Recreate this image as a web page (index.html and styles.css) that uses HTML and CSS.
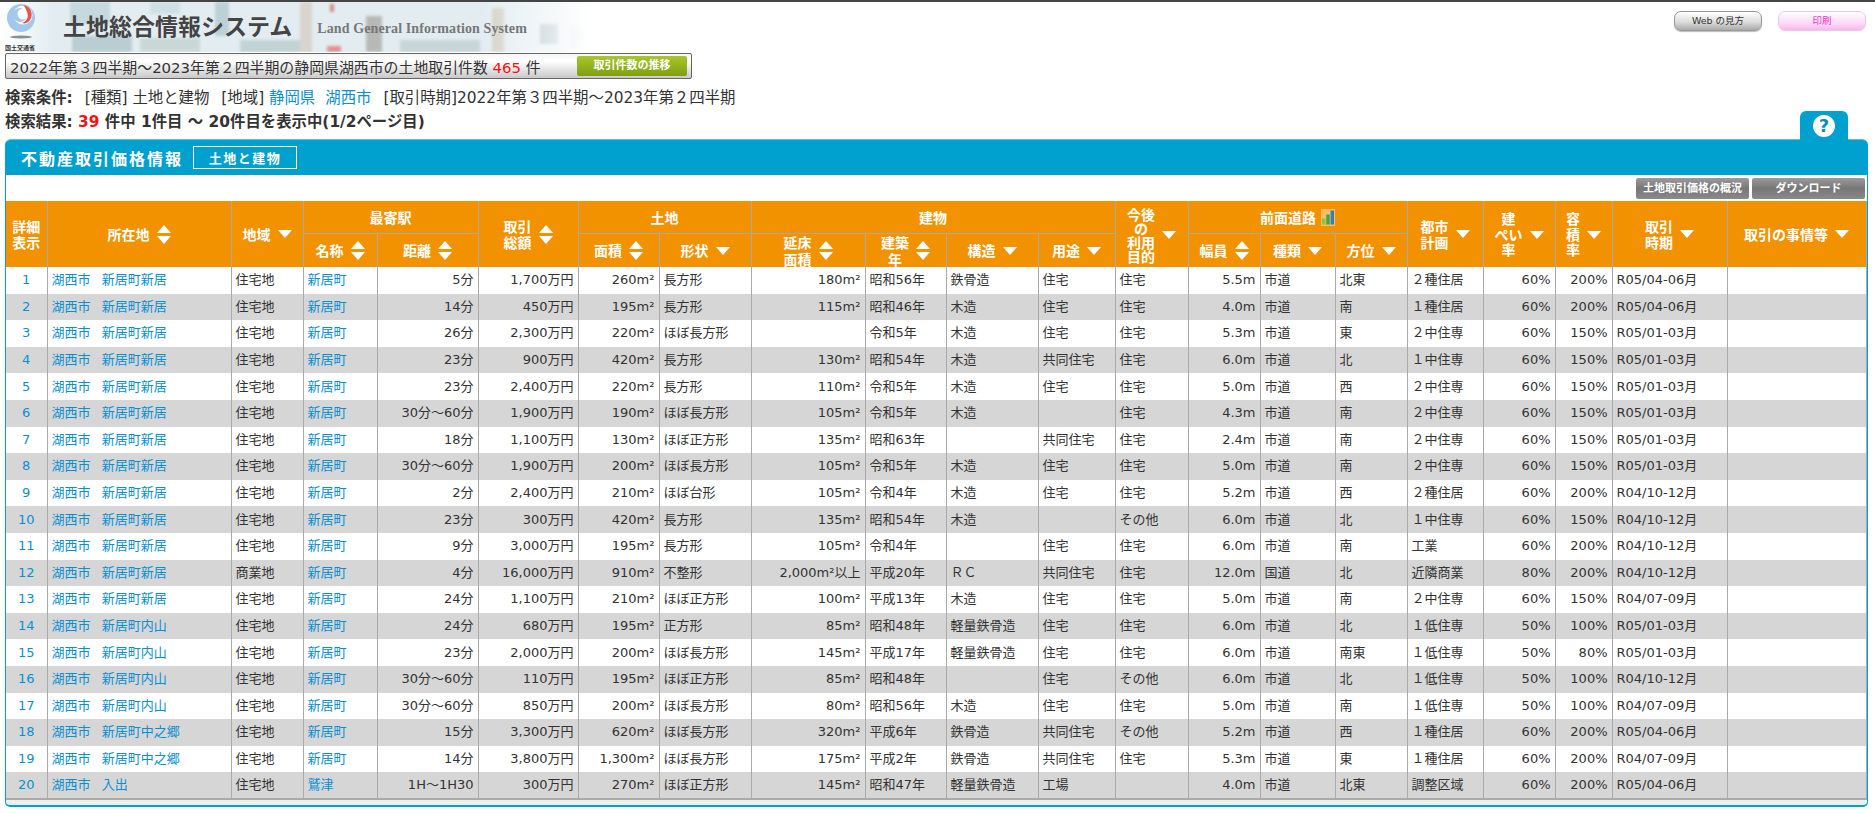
FILE: index.html
```html
<!DOCTYPE html>
<html lang="ja">
<head>
<meta charset="utf-8">
<title>土地総合情報システム</title>
<link rel="stylesheet" href="styles.css">
</head>
<body>
<header class="top">
  <div class="top-left">
    <div class="banner">
      <svg class="city" viewBox="0 0 590 50" preserveAspectRatio="none" aria-hidden="true">
        <defs>
          <filter id="bl"><feGaussianBlur stdDeviation="1.4"/></filter>
          <linearGradient id="fade" x1="0" x2="1" y1="0" y2="0">
            <stop offset="0" stop-color="#fff" stop-opacity="1"/>
            <stop offset=".09" stop-color="#fff" stop-opacity="0"/>
            <stop offset=".82" stop-color="#fff" stop-opacity="0"/>
            <stop offset="1" stop-color="#fff" stop-opacity="1"/>
          </linearGradient>
        </defs>
        <rect width="590" height="50" fill="#e3edf1"/>
        <g filter="url(#bl)">
          <rect x="70" y="0" width="40" height="22" fill="#c6d9de"/>
          <rect x="72" y="34" width="60" height="16" fill="#b9cdd3"/>
          <rect x="140" y="36" width="60" height="14" fill="#c9d8d6"/>
          <rect x="150" y="0" width="30" height="12" fill="#cfe0e4"/>
          <rect x="215" y="0" width="14" height="34" fill="#bcd0d6"/>
          <rect x="240" y="38" width="70" height="12" fill="#c2d3d6"/>
          <rect x="300" y="0" width="12" height="50" fill="#d9d4cd"/>
          <rect x="330" y="2" width="4" height="8" fill="#d88888"/>
          <rect x="327" y="44" width="14" height="6" fill="#e58f92"/>
          <rect x="366" y="14" width="16" height="36" fill="#b7b9b6"/>
          <rect x="400" y="38" width="80" height="12" fill="#c7d5d8"/>
          <rect x="492" y="6" width="12" height="44" fill="#d6d3c8"/>
          <rect x="540" y="22" width="18" height="20" fill="#a8bcc6"/>
          <rect x="570" y="24" width="14" height="22" fill="#c8d6dc"/>
        </g>
        <rect width="590" height="50" fill="url(#fade)"/>
      </svg>
      <div class="logo">
        <svg class="logo-mark" viewBox="0 0 32 40" aria-hidden="true">
          <circle cx="16" cy="16" r="14" fill="#a4c8ec"/>
          <circle cx="18" cy="13" r="9.5" fill="#fff"/>
          <circle cx="15" cy="13" r="7" fill="#a4c8ec"/>
          <circle cx="18" cy="12" r="5.5" fill="#fff"/>
          <path d="M18 3C26 4 29 12 25 18C23 21 20 22 17 21C22 19 24 15 22 10C21 7 20 5 18 3Z" fill="#e2574c"/>
          <ellipse cx="16" cy="35" rx="11" ry="1.5" fill="#8d8d8d"/>
        </svg>
        <span class="logo-text">国土交通省</span>
      </div>
      <div class="sys-title">土地総合情報システム</div>
      <div class="sys-sub">Land General Information System</div>
    </div>
    <div class="count-box">
      <span>2022年第３四半期～2023年第２四半期の静岡県湖西市の土地取引件数 <em class="red">465</em> 件</span>
      <span class="trend-btn">取引件数の推移</span>
    </div>
  </div>
  <div class="top-right">
    <span class="pill pill-gray">Web の見方</span>
    <span class="pill pill-pink">印刷</span>
  </div>
</header>

<section class="search">
  <p class="cond"><b>検索条件:</b><span class="sp">[種類] 土地と建物</span><span class="sp">[地域] <a href="#">静岡県</a><a class="ml" href="#">湖西市</a></span><span class="sp">[取引時期]2022年第３四半期～2023年第２四半期</span></p>
  <p class="result"><b>検索結果: <em class="red">39</em> 件中 1件目 ～ 20件目を表示中(1/2ページ目)</b></p>
</section>

<main class="panel">
  <a class="help" href="#" aria-label="ヘルプ"><span class="help-mark">?</span></a>
  <div class="panel-head">
    <h1>不動産取引価格情報</h1>
    <span class="chip">土地と建物</span>
  </div>
  <div class="panel-body">
    <div class="tools">
      <span class="tool">土地取引価格の概況</span>
      <span class="tool">ダウンロード</span>
    </div>
    <table class="data">
      <colgroup>
        <col class="w41"><col class="w184"><col class="w72"><col class="w74"><col class="w101"><col class="w100"><col class="w81"><col class="w92"><col class="w114"><col class="w81"><col class="w92"><col class="w77"><col class="w73"><col class="w72"><col class="w75"><col class="w72"><col class="w76"><col class="w72"><col class="w57"><col class="w115"><col class="w139">
      </colgroup>
      <thead>
        <tr>
          <th rowspan="2">詳細<br>表示</th>
          <th rowspan="2"><span class="hw">所在地<i class="ud"></i></span></th>
          <th rowspan="2"><span class="hw">地域<i class="dn"></i></span></th>
          <th colspan="2">最寄駅</th>
          <th rowspan="2"><span class="hw"><span>取引<br>総額</span><i class="ud"></i></span></th>
          <th colspan="2">土地</th>
          <th colspan="4">建物</th>
          <th rowspan="2"><span class="hw"><span class="l4">今後<br>の<br>利用<br>目的</span><i class="dn"></i></span></th>
          <th colspan="3"><span class="hw">前面道路<svg class="chart" viewBox="0 0 14 16" aria-hidden="true"><rect x="1" y="9" width="3.4" height="6" fill="#8cc63f"/><rect x="5.3" y="5" width="3.4" height="10" fill="#3fa34d"/><rect x="9.6" y="1" width="3.4" height="14" fill="#2f7fc1"/></svg></span></th>
          <th rowspan="2"><span class="hw"><span>都市<br>計画</span><i class="dn"></i></span></th>
          <th rowspan="2"><span class="hw"><span class="l3">建<br>ぺい<br>率</span><i class="dn"></i></span></th>
          <th rowspan="2"><span class="hw"><span class="l3">容<br>積<br>率</span><i class="dn"></i></span></th>
          <th rowspan="2"><span class="hw"><span>取引<br>時期</span><i class="dn"></i></span></th>
          <th rowspan="2"><span class="hw">取引の事情等<i class="dn"></i></span></th>
        </tr>
        <tr>
          <th><span class="hw">名称<i class="ud"></i></span></th>
          <th><span class="hw">距離<i class="ud"></i></span></th>
          <th><span class="hw">面積<i class="ud"></i></span></th>
          <th><span class="hw">形状<i class="dn"></i></span></th>
          <th><span class="hw"><span>延床<br>面積</span><i class="ud"></i></span></th>
          <th><span class="hw"><span>建築<br>年</span><i class="ud"></i></span></th>
          <th><span class="hw">構造<i class="dn"></i></span></th>
          <th><span class="hw">用途<i class="dn"></i></span></th>
          <th><span class="hw">幅員<i class="ud"></i></span></th>
          <th><span class="hw">種類<i class="dn"></i></span></th>
          <th><span class="hw">方位<i class="dn"></i></span></th>
        </tr>
      </thead>
      <tbody>
<tr><td class="c"><a href="#">1</a></td><td><a href="#">湖西市 新居町新居</a></td><td>住宅地</td><td><a href="#">新居町</a></td><td class="r">5分</td><td class="r">1,700万円</td><td class="r">260m²</td><td>長方形</td><td class="r">180m²</td><td>昭和56年</td><td>鉄骨造</td><td>住宅</td><td>住宅</td><td class="r">5.5m</td><td>市道</td><td>北東</td><td>２種住居</td><td class="r">60%</td><td class="r">200%</td><td>R05/04-06月</td><td></td></tr>
<tr><td class="c"><a href="#">2</a></td><td><a href="#">湖西市 新居町新居</a></td><td>住宅地</td><td><a href="#">新居町</a></td><td class="r">14分</td><td class="r">450万円</td><td class="r">195m²</td><td>長方形</td><td class="r">115m²</td><td>昭和46年</td><td>木造</td><td>住宅</td><td>住宅</td><td class="r">4.0m</td><td>市道</td><td>南</td><td>１種住居</td><td class="r">60%</td><td class="r">200%</td><td>R05/04-06月</td><td></td></tr>
<tr><td class="c"><a href="#">3</a></td><td><a href="#">湖西市 新居町新居</a></td><td>住宅地</td><td><a href="#">新居町</a></td><td class="r">26分</td><td class="r">2,300万円</td><td class="r">220m²</td><td>ほぼ長方形</td><td class="r"></td><td>令和5年</td><td>木造</td><td>住宅</td><td>住宅</td><td class="r">5.3m</td><td>市道</td><td>東</td><td>２中住専</td><td class="r">60%</td><td class="r">150%</td><td>R05/01-03月</td><td></td></tr>
<tr><td class="c"><a href="#">4</a></td><td><a href="#">湖西市 新居町新居</a></td><td>住宅地</td><td><a href="#">新居町</a></td><td class="r">23分</td><td class="r">900万円</td><td class="r">420m²</td><td>長方形</td><td class="r">130m²</td><td>昭和54年</td><td>木造</td><td>共同住宅</td><td>住宅</td><td class="r">6.0m</td><td>市道</td><td>北</td><td>１中住専</td><td class="r">60%</td><td class="r">150%</td><td>R05/01-03月</td><td></td></tr>
<tr><td class="c"><a href="#">5</a></td><td><a href="#">湖西市 新居町新居</a></td><td>住宅地</td><td><a href="#">新居町</a></td><td class="r">23分</td><td class="r">2,400万円</td><td class="r">220m²</td><td>長方形</td><td class="r">110m²</td><td>令和5年</td><td>木造</td><td>住宅</td><td>住宅</td><td class="r">5.0m</td><td>市道</td><td>西</td><td>２中住専</td><td class="r">60%</td><td class="r">150%</td><td>R05/01-03月</td><td></td></tr>
<tr><td class="c"><a href="#">6</a></td><td><a href="#">湖西市 新居町新居</a></td><td>住宅地</td><td><a href="#">新居町</a></td><td class="r">30分～60分</td><td class="r">1,900万円</td><td class="r">190m²</td><td>ほぼ長方形</td><td class="r">105m²</td><td>令和5年</td><td>木造</td><td></td><td>住宅</td><td class="r">4.3m</td><td>市道</td><td>南</td><td>２中住専</td><td class="r">60%</td><td class="r">150%</td><td>R05/01-03月</td><td></td></tr>
<tr><td class="c"><a href="#">7</a></td><td><a href="#">湖西市 新居町新居</a></td><td>住宅地</td><td><a href="#">新居町</a></td><td class="r">18分</td><td class="r">1,100万円</td><td class="r">130m²</td><td>ほぼ正方形</td><td class="r">135m²</td><td>昭和63年</td><td></td><td>共同住宅</td><td>住宅</td><td class="r">2.4m</td><td>市道</td><td>南</td><td>２中住専</td><td class="r">60%</td><td class="r">150%</td><td>R05/01-03月</td><td></td></tr>
<tr><td class="c"><a href="#">8</a></td><td><a href="#">湖西市 新居町新居</a></td><td>住宅地</td><td><a href="#">新居町</a></td><td class="r">30分～60分</td><td class="r">1,900万円</td><td class="r">200m²</td><td>ほぼ長方形</td><td class="r">105m²</td><td>令和5年</td><td>木造</td><td>住宅</td><td>住宅</td><td class="r">5.0m</td><td>市道</td><td>南</td><td>２中住専</td><td class="r">60%</td><td class="r">150%</td><td>R05/01-03月</td><td></td></tr>
<tr><td class="c"><a href="#">9</a></td><td><a href="#">湖西市 新居町新居</a></td><td>住宅地</td><td><a href="#">新居町</a></td><td class="r">2分</td><td class="r">2,400万円</td><td class="r">210m²</td><td>ほぼ台形</td><td class="r">105m²</td><td>令和4年</td><td>木造</td><td>住宅</td><td>住宅</td><td class="r">5.2m</td><td>市道</td><td>西</td><td>２種住居</td><td class="r">60%</td><td class="r">200%</td><td>R04/10-12月</td><td></td></tr>
<tr><td class="c"><a href="#">10</a></td><td><a href="#">湖西市 新居町新居</a></td><td>住宅地</td><td><a href="#">新居町</a></td><td class="r">23分</td><td class="r">300万円</td><td class="r">420m²</td><td>長方形</td><td class="r">135m²</td><td>昭和54年</td><td>木造</td><td></td><td>その他</td><td class="r">6.0m</td><td>市道</td><td>北</td><td>１中住専</td><td class="r">60%</td><td class="r">150%</td><td>R04/10-12月</td><td></td></tr>
<tr><td class="c"><a href="#">11</a></td><td><a href="#">湖西市 新居町新居</a></td><td>住宅地</td><td><a href="#">新居町</a></td><td class="r">9分</td><td class="r">3,000万円</td><td class="r">195m²</td><td>長方形</td><td class="r">105m²</td><td>令和4年</td><td></td><td>住宅</td><td>住宅</td><td class="r">6.0m</td><td>市道</td><td>南</td><td>工業</td><td class="r">60%</td><td class="r">200%</td><td>R04/10-12月</td><td></td></tr>
<tr><td class="c"><a href="#">12</a></td><td><a href="#">湖西市 新居町新居</a></td><td>商業地</td><td><a href="#">新居町</a></td><td class="r">4分</td><td class="r">16,000万円</td><td class="r">910m²</td><td>不整形</td><td class="r">2,000m²以上</td><td>平成20年</td><td>ＲＣ</td><td>共同住宅</td><td>住宅</td><td class="r">12.0m</td><td>国道</td><td>北</td><td>近隣商業</td><td class="r">80%</td><td class="r">200%</td><td>R04/10-12月</td><td></td></tr>
<tr><td class="c"><a href="#">13</a></td><td><a href="#">湖西市 新居町新居</a></td><td>住宅地</td><td><a href="#">新居町</a></td><td class="r">24分</td><td class="r">1,100万円</td><td class="r">210m²</td><td>ほぼ正方形</td><td class="r">100m²</td><td>平成13年</td><td>木造</td><td>住宅</td><td>住宅</td><td class="r">5.0m</td><td>市道</td><td>南</td><td>２中住専</td><td class="r">60%</td><td class="r">150%</td><td>R04/07-09月</td><td></td></tr>
<tr><td class="c"><a href="#">14</a></td><td><a href="#">湖西市 新居町内山</a></td><td>住宅地</td><td><a href="#">新居町</a></td><td class="r">24分</td><td class="r">680万円</td><td class="r">195m²</td><td>正方形</td><td class="r">85m²</td><td>昭和48年</td><td>軽量鉄骨造</td><td>住宅</td><td>住宅</td><td class="r">6.0m</td><td>市道</td><td>北</td><td>１低住専</td><td class="r">50%</td><td class="r">100%</td><td>R05/01-03月</td><td></td></tr>
<tr><td class="c"><a href="#">15</a></td><td><a href="#">湖西市 新居町内山</a></td><td>住宅地</td><td><a href="#">新居町</a></td><td class="r">23分</td><td class="r">2,000万円</td><td class="r">200m²</td><td>ほぼ長方形</td><td class="r">145m²</td><td>平成17年</td><td>軽量鉄骨造</td><td>住宅</td><td>住宅</td><td class="r">6.0m</td><td>市道</td><td>南東</td><td>１低住専</td><td class="r">50%</td><td class="r">80%</td><td>R05/01-03月</td><td></td></tr>
<tr><td class="c"><a href="#">16</a></td><td><a href="#">湖西市 新居町内山</a></td><td>住宅地</td><td><a href="#">新居町</a></td><td class="r">30分～60分</td><td class="r">110万円</td><td class="r">195m²</td><td>ほぼ正方形</td><td class="r">85m²</td><td>昭和48年</td><td></td><td>住宅</td><td>その他</td><td class="r">6.0m</td><td>市道</td><td>北</td><td>１低住専</td><td class="r">50%</td><td class="r">100%</td><td>R04/10-12月</td><td></td></tr>
<tr><td class="c"><a href="#">17</a></td><td><a href="#">湖西市 新居町内山</a></td><td>住宅地</td><td><a href="#">新居町</a></td><td class="r">30分～60分</td><td class="r">850万円</td><td class="r">200m²</td><td>ほぼ長方形</td><td class="r">80m²</td><td>昭和56年</td><td>木造</td><td>住宅</td><td>住宅</td><td class="r">5.0m</td><td>市道</td><td>南</td><td>１低住専</td><td class="r">50%</td><td class="r">100%</td><td>R04/07-09月</td><td></td></tr>
<tr><td class="c"><a href="#">18</a></td><td><a href="#">湖西市 新居町中之郷</a></td><td>住宅地</td><td><a href="#">新居町</a></td><td class="r">15分</td><td class="r">3,300万円</td><td class="r">620m²</td><td>ほぼ長方形</td><td class="r">320m²</td><td>平成6年</td><td>鉄骨造</td><td>共同住宅</td><td>その他</td><td class="r">5.2m</td><td>市道</td><td>西</td><td>１種住居</td><td class="r">60%</td><td class="r">200%</td><td>R05/04-06月</td><td></td></tr>
<tr><td class="c"><a href="#">19</a></td><td><a href="#">湖西市 新居町中之郷</a></td><td>住宅地</td><td><a href="#">新居町</a></td><td class="r">14分</td><td class="r">3,800万円</td><td class="r">1,300m²</td><td>ほぼ長方形</td><td class="r">175m²</td><td>平成2年</td><td>鉄骨造</td><td>共同住宅</td><td>住宅</td><td class="r">5.3m</td><td>市道</td><td>東</td><td>１種住居</td><td class="r">60%</td><td class="r">200%</td><td>R04/07-09月</td><td></td></tr>
<tr><td class="c"><a href="#">20</a></td><td><a href="#">湖西市 入出</a></td><td>住宅地</td><td><a href="#">鷲津</a></td><td class="r">1H～1H30</td><td class="r">300万円</td><td class="r">270m²</td><td>ほぼ正方形</td><td class="r">145m²</td><td>昭和47年</td><td>軽量鉄骨造</td><td>工場</td><td></td><td class="r">4.0m</td><td>市道</td><td>北東</td><td>調整区域</td><td class="r">60%</td><td class="r">200%</td><td>R05/04-06月</td><td></td></tr>
      </tbody>
    </table>
  </div>
</main>
</body>
</html>
```

FILE: styles.css
```css
* { box-sizing: border-box; }
html, body { margin: 0; padding: 0; background: #fff; }
body {
  font-family: "DejaVu Sans", "Noto Sans CJK JP", sans-serif;
  color: #333;
  font-size: 13px;
  border-top: 2px solid #444;
}
a { color: #0a8fd3; text-decoration: none; }
em { font-style: normal; }
.red { color: #f01414; }

.top { display: flex; justify-content: space-between; align-items: flex-start; }
.top-left { width: 700px; }
.banner {
  position: relative;
  width: 590px;
  height: 50px;
  display: flex;
  align-items: center;
}
.city { position: absolute; left: 0; top: 0; width: 590px; height: 50px; }
.logo {
  position: relative;
  width: 63px;
  height: 50px;
  display: flex;
  flex-direction: column;
  padding-left: 5px;
}
.logo-mark { width: 32px; height: 40px; display: block; flex: none; }
.logo-text { margin-top: 2px; font-size: 6px; line-height: 7px; font-weight: 700; color: #333; white-space: nowrap; }
.sys-title {
  position: relative;
  font-family: "Noto Sans CJK JP", sans-serif;
  font-weight: 700;
  font-size: 23px;
  line-height: 30px;
  color: #444;
  margin-top: -4px;
  white-space: nowrap;
}
.sys-sub {
  position: relative;
  margin: 4px 0 0 25px;
  font-family: "Liberation Serif", serif;
  font-weight: 700;
  font-size: 14px;
  letter-spacing: .1px;
  color: #777;
  white-space: nowrap;
}
.count-box {
  margin: 1px 0 0 5px;
  width: 687px;
  height: 26px;
  border: 1px solid #666;
  border-radius: 2px;
  background: linear-gradient(#f6f6f6, #fff 30%, #c9c9c9);
  display: flex;
  align-items: center;
  justify-content: space-between;
  padding: 0 4px 0 4px;
  font-size: 14.9px;
  white-space: nowrap;
}
.trend-btn {
  width: 110px;
  height: 20px;
  border-radius: 2px;
  background: linear-gradient(#a9c62c, #7f9f10);
  color: #fff;
  font-size: 11px;
  font-weight: 700;
  line-height: 20px;
  text-align: center;
}
.top-right { display: flex; gap: 16px; padding: 9px 9px 0 0; }
.pill {
  width: 88px;
  height: 20px;
  border-radius: 7px;
  font-size: 9.5px;
  line-height: 18px;
  text-align: center;
}
.pill-gray { border: 1px solid #999; background: linear-gradient(#fff, #ddd 55%, #aaa); color: #333; box-shadow: 0 1px 1px #bbb; }
.pill-pink { border: 1px solid #f3c4ee; background: linear-gradient(#fff, #fbd4f6 70%, #f6b7ee); color: #e838c8; }

.search { height: 60px; padding: 7px 0 0 5px; font-size: 15.4px; line-height: 24px; }
.search p { margin: 0; white-space: nowrap; }
.sp { margin-left: 12px; }
.ml { margin-left: 10px; }

.panel { position: relative; width: 1863px; margin-left: 5px; }
.help {
  position: absolute;
  right: 20px;
  top: -28px;
  width: 48px;
  height: 29px;
  border-radius: 6px 6px 0 0;
  background: #00a0cf;
  display: flex;
  align-items: center;
  justify-content: center;
}
.help-mark {
  width: 22px;
  height: 22px;
  border-radius: 50%;
  background: #fff;
  color: #0a8ec0;
  font-weight: 700;
  font-size: 18px;
  line-height: 22px;
  text-align: center;
}
.panel-head {
  height: 36px;
  background: #00a0cf;
  border-radius: 6px 6px 0 0;
  border-top: 1px solid #5cc0dc;
  display: flex;
  align-items: center;
  padding-left: 16px;
  gap: 10px;
  color: #fff;
}
.panel-head h1 { margin: 0; font-size: 16px; font-weight: 700; font-family: "Noto Sans CJK JP", sans-serif; letter-spacing: 2px; }
.chip {
  width: 104px;
  height: 23px;
  border: 1px solid #fff;
  font-size: 13px;
  font-weight: 700;
  line-height: 21px;
  text-align: center;
  letter-spacing: 1.5px;
  font-family: "Noto Sans CJK JP", sans-serif;
}
.panel-body {
  border: 1px solid #00a0cf;
  border-top: 0;
  border-bottom-width: 2px;
  border-radius: 0 0 5px 5px;
  background: #eee;
  padding-bottom: 5px;
}
.tools {
  height: 26px;
  background: #fff;
  display: flex;
  justify-content: flex-end;
  gap: 3px;
  padding: 3px 2px 0 0;
}
.tool {
  width: 113px;
  height: 21px;
  border-radius: 2px;
  background: linear-gradient(#9b9b9b, #777 50%, #8a8a8a);
  color: #fff;
  font-size: 11px;
  font-weight: 700;
  line-height: 21px;
  text-align: center;
  white-space: nowrap;
}

.data { table-layout: fixed; width: 1860px; border-collapse: collapse; border-bottom: 2px solid #aaa; }
.w41 { width: 41px; } .w57 { width: 57px; } .w72 { width: 72px; } .w73 { width: 73px; } .w74 { width: 74px; }
.w75 { width: 75px; } .w76 { width: 76px; } .w77 { width: 77px; } .w81 { width: 81px; } .w92 { width: 92px; }
.w100 { width: 100px; } .w101 { width: 101px; } .w114 { width: 114px; } .w115 { width: 115px; } .w139 { width: 139px; } .w184 { width: 184px; }

.data th {
  height: 32.5px;
  padding: 0;
  background: #f39200;
  color: #fff;
  font-size: 14px;
  line-height: 16.5px;
  font-weight: 700;
  font-family: "Noto Sans CJK JP", sans-serif;
  text-align: center;
  border: 1px solid #aaa;
  border-top: 0;
  border-bottom: 0;
}
.data thead tr:last-child th { border-top: 1px solid #aaa; }
.data th[rowspan] { border-top: 0; }
.data th:first-child { border-left: 0; }
.data th[colspan] { border-bottom: 1px solid #aaa; }
.hw { display: inline-flex; align-items: center; justify-content: center; gap: 7px; white-space: nowrap; }
.l3 { line-height: 15.5px; }
.l4 { line-height: 14px; }
.dn { display: block; width: 0; height: 0; border: 7px solid transparent; border-top: 8px solid #fff; border-bottom: 0; }
.ud { display: block; width: 14px; height: 19px; position: relative; }
.ud::before, .ud::after { content: ""; position: absolute; left: 0; width: 0; height: 0; border: 7px solid transparent; }
.ud::before { top: 0; border-top: 0; border-bottom: 8px solid #fff; }
.ud::after { bottom: 0; border-bottom: 0; border-top: 8px solid #fff; }
.chart { width: 14px; height: 17px; margin-left: -2px; background: #fff6; }

.data td {
  height: 26.6px;
  padding: 0 4px;
  border-left: 1px solid #aaa;
  border-right: 1px solid #aaa;
  line-height: 18px;
  white-space: nowrap;
  overflow: hidden;
  background: #fff;
}
.data td:first-child { border-left: 0; }
.data td:nth-child(2) a { word-spacing: 7px; }
.data tbody tr:nth-child(even) td { background: #d6d6d6; }
.r { text-align: right; }
.c { text-align: center; }
```
